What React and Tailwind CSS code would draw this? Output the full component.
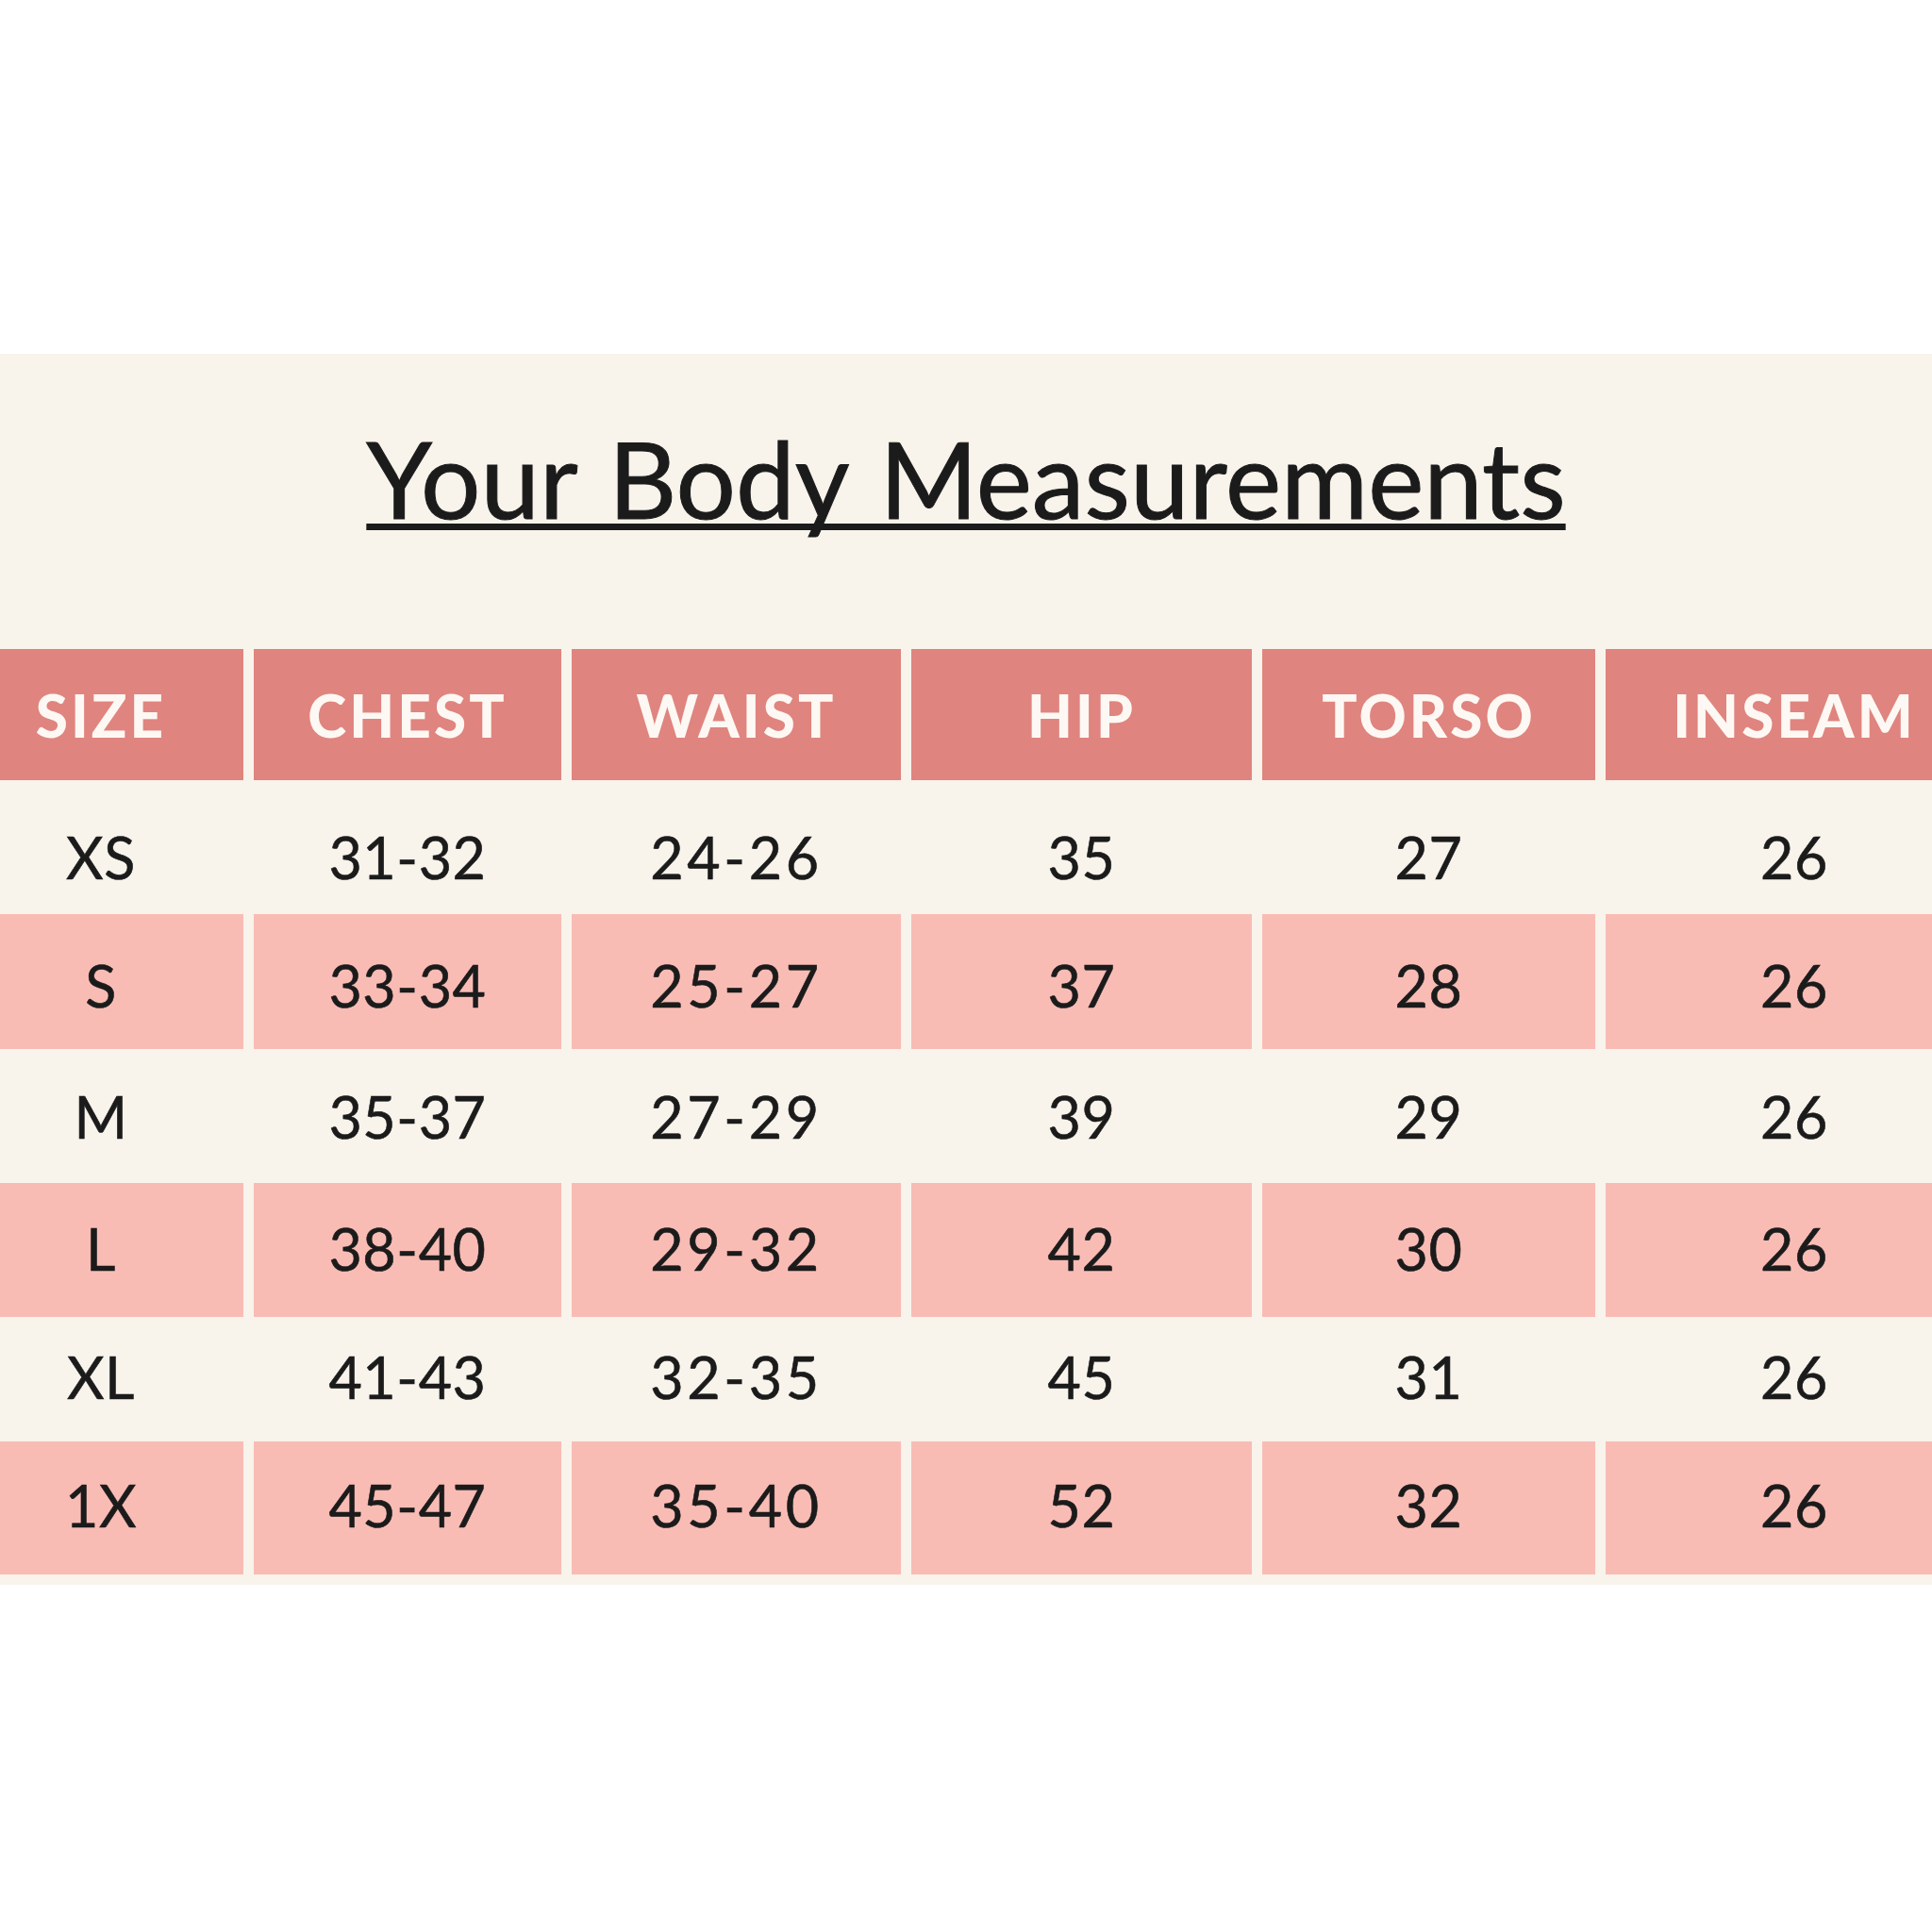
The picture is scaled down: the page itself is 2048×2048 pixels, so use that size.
const columns = ['SIZE', 'CHEST', 'WAIST', 'HIP', 'TORSO', 'INSEAM']

const rows = [
  { h: 'h-[142px]', nudge: 'pt-[20px]', pink: false, cells: ['XS', '31-32', '24-26', '35', '27', '26'] },
  { h: 'h-[143px]', nudge: 'pt-[8px]', pink: true, cells: ['S', '33-34', '25-27', '37', '28', '26'] },
  { h: 'h-[142px]', nudge: '', pink: false, cells: ['M', '35-37', '27-29', '39', '29', '26'] },
  { h: 'h-[142px]', nudge: 'pb-[4px]', pink: true, cells: ['L', '38-40', '29-32', '42', '30', '26'] },
  { h: 'h-[132px]', nudge: 'pb-[6px]', pink: false, cells: ['XL', '41-43', '32-35', '45', '31', '26'] },
  { h: 'h-[141px]', nudge: 'pb-[6px]', pink: true, cells: ['1X', '45-47', '35-40', '52', '32', '26'] },
]

const grid = 'grid grid-cols-[302px_326px_349px_361px_353px_400px] gap-x-[11px]'

export default function App() {
  return (
    <div className="w-[2048px] h-[2048px] overflow-hidden bg-white font-['Lato','Open_Sans',sans-serif] text-[#1b1b1b]">
      <div className="mt-[375px] h-[1305px] bg-[#f8f3eb]">
        <div className="h-[313px] flex justify-center pt-[76px]">
          <h1 className="h-fit text-[112px] leading-none font-normal underline decoration-[7px] underline-offset-[5px] [text-decoration-skip-ink:none] [word-spacing:6px] [-webkit-text-stroke:1px_#1b1b1b]">
            Your Body Measurements
          </h1>
        </div>

        <div className="-ml-[44px] w-[2146px]">
          {/* header */}
          <div className={`${grid} h-[139px]`}>
            {columns.map((c) => (
              <div key={c} className="bg-[#e0847f] flex items-center justify-center">
                <span className="text-[#fdf8f3] text-[62px] leading-none font-black tracking-[0.05em]">
                  {c}
                </span>
              </div>
            ))}
          </div>

          {rows.map((r) => (
            <div key={r.cells[0]} className={`${grid} ${r.h}`}>
              {r.cells.map((v, i) => (
                <div
                  key={i}
                  className={`flex items-center justify-center ${r.nudge} ${r.pink ? 'bg-[#f9bcb5]' : ''}`}
                >
                  <span className={`text-[61px] leading-none font-normal [-webkit-text-stroke:0.6px_#1b1b1b] ${i === 2 ? 'tracking-[0.06em]' : 'tracking-[0.01em]'}`}>
                    {v}
                  </span>
                </div>
              ))}
            </div>
          ))}
        </div>
      </div>
    </div>
  )
}
